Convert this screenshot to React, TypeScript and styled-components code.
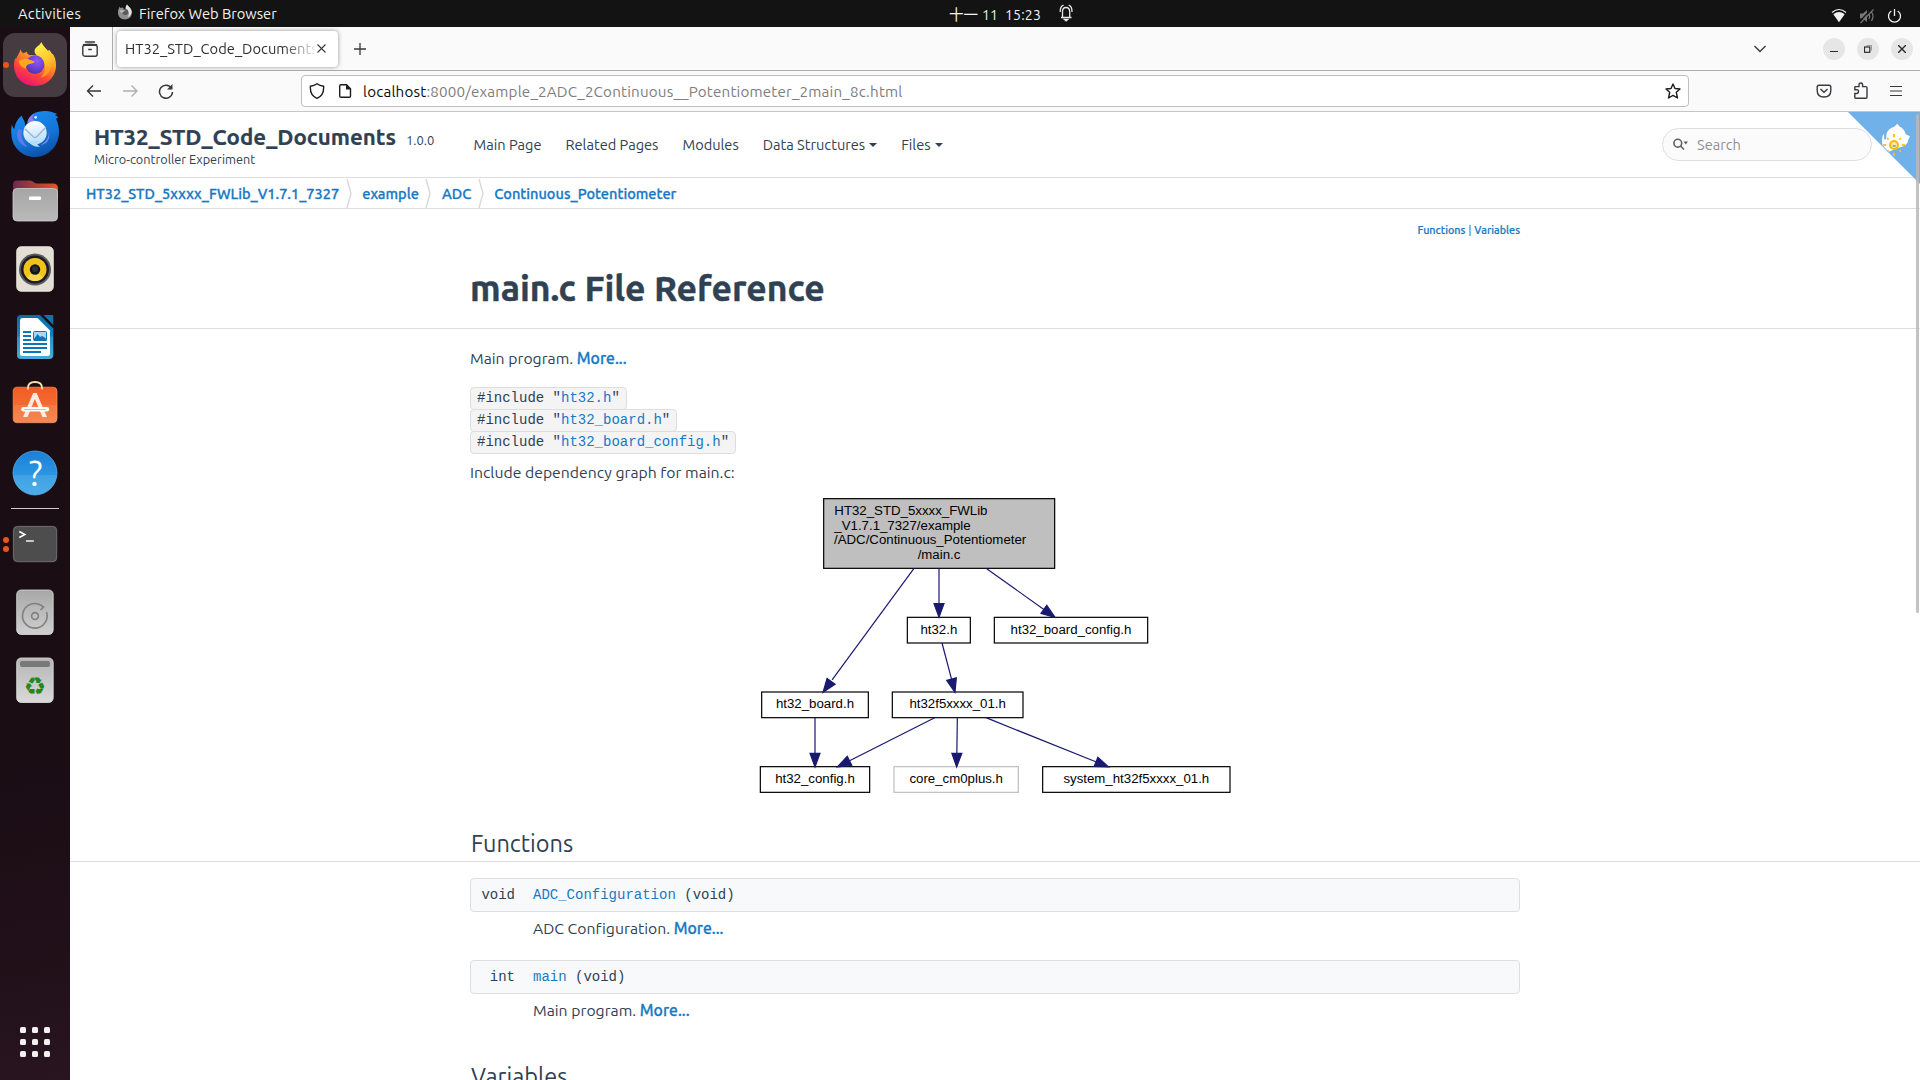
import React from 'react';
import styled, { createGlobalStyle } from 'styled-components';

const SANS = '"Ubuntu", "Noto Sans", "Open Sans", sans-serif';
const MONO = '"Liberation Mono", monospace';
const INK = '#2f4153';
const LINK = '#1779c4';
const LINE = '#dedede';

const GlobalStyle = createGlobalStyle`
  * { box-sizing: border-box; }
  html, body { margin: 0; padding: 0; overflow: hidden; background: #fff; }
  svg { display: block; flex: none; }
`;

const Desktop = styled.div`
  display: grid;
  grid-template: 27px 1053px / 70px 1850px;
  width: 1920px;
  height: 1080px;
  font-family: ${SANS};
  font-variant-ligatures: none;
  overflow: hidden;
`;

/* ---------- top panel ---------- */

const Panel = styled.header`
  grid-column: 1 / -1;
  display: grid;
  grid-template-columns: 949px 1fr auto;
  background: #131313;
  color: #f2f2f2;
  font-size: 14.7px;
  line-height: 27px;
`;

const PanelLeft = styled.div`
  display: flex;
  padding-left: 18px;
`;

const Activities = styled.span`
  width: 99px;
  letter-spacing: 0.28px;
`;

const AppMenu = styled.span`
  display: flex;
  gap: 6px;
  letter-spacing: -0.02px;
  svg { margin-top: 4px; }
`;

const Clock = styled.div`
  display: flex;
  align-items: flex-start;
  white-space: pre;
  font-size: 14px;
  line-height: 31px;
  letter-spacing: 0.2px;
`;

const ClockDate = styled.span`
  font-family: "Noto Sans CJK SC", sans-serif;
  font-size: 14.5px;
  line-height: 27px;
  letter-spacing: 0;
  width: 33px;
`;

const ClockTime = styled.span`
  width: 77px;
`;

const Tray = styled.div`
  display: flex;
  align-items: center;
  gap: 12px;
  padding-right: 18px;
`;

/* ---------- dock ---------- */

const Dock = styled.nav`
  display: flex;
  flex-direction: column;
  padding-top: 4px;
  background: linear-gradient(170deg, #1a0d13 0%, #1a0d14 70%, #221019 88%, #28151f 100%);
`;

const DockCell = styled.div`
  display: grid;
  grid-template-columns: 3px 64px;
  align-items: center;
  height: 68px;
  position: relative;
`;

const DockTile = styled.div<{ $active?: boolean }>`
  grid-column: 2;
  width: 64px;
  height: 64px;
  border-radius: 12px;
  background: ${(p) => (p.$active ? '#453b41' : 'transparent')};
`;

const RunningDots = styled.div`
  position: absolute;
  left: 3px;
  top: 0;
  height: 68px;
  display: flex;
  flex-direction: column;
  justify-content: center;
  gap: 3px;
`;

const RunningDot = styled.i`
  width: 6px;
  height: 6px;
  border-radius: 50%;
  background: #e95420;
`;

const DockRule = styled.div`
  height: 1px;
  margin: 1px 11px;
  background: #d0ccce;
`;

const AppsGrid = styled.div`
  display: grid;
  grid-template-columns: repeat(3, 6px);
  grid-auto-rows: 6px;
  gap: 6px;
  justify-content: center;
  margin-top: auto;
  padding-bottom: 23px;
  i { background: #f2f0f1; border-radius: 1.5px; }
`;

/* ---------- browser chrome ---------- */

const Browser = styled.main`
  display: flex;
  flex-direction: column;
  min-width: 0;
  background: #fff;
`;

const TabStrip = styled.div`
  display: flex;
  align-items: center;
  height: 44px;
  background: #fafafa;
  border-bottom: 1px solid #adadad;
`;

const ViewButton = styled.div`
  width: 43px;
  height: 43px;
  padding: 14px 0 0 12px;
  border-right: 1px solid #adadad;
`;

const Tab = styled.div`
  display: flex;
  align-items: center;
  justify-content: space-between;
  width: 221px;
  height: 36px;
  margin: 0 16px 0 4px;
  padding: 0 12px 0 8px;
  background: #fff;
  border-radius: 4px;
  box-shadow: 0 0 4px rgba(0, 0, 0, 0.42);
`;

const TabTitle = styled.span`
  width: 190px;
  overflow: hidden;
  white-space: nowrap;
  font-size: 14.7px;
  line-height: 24px;
  color: #2e2e33;
  mask-image: linear-gradient(to right, #000 158px, rgba(0, 0, 0, 0.1) 190px);
`;

const WindowControls = styled.div`
  display: flex;
  align-items: center;
  gap: 12px;
  margin-left: auto;
  padding-right: 7px;
`;

const ControlButton = styled.span`
  display: grid;
  place-items: center;
  width: 22px;
  height: 22px;
  border-radius: 50%;
  background: #e6e6e6;
`;

const TabMenu = styled.span`
  margin-right: 45px;
`;

const Toolbar = styled.div`
  display: flex;
  align-items: center;
  height: 41px;
  padding: 0 18px 0 16px;
  background: #fafafa;
  border-bottom: 1px solid #c6c6c6;
`;

const NavButtons = styled.div`
  display: flex;
  align-items: center;
  gap: 20px;
  width: 215px;
`;

const UrlBar = styled.div`
  display: flex;
  align-items: center;
  width: 1388px;
  height: 32px;
  padding: 0 7px 0 7px;
  background: #fff;
  border: 1px solid #bfbfc0;
  border-radius: 4px;
`;

const Url = styled.span`
  flex: 1;
  margin: 2px 0 0 11px;
  font-size: 15.2px;
  line-height: 24px;
  letter-spacing: 0.18px;
  color: #7d7d80;
  b { font-weight: 400; color: #0c0c0d; }
`;

const UrlIcons = styled.span`
  display: flex;
  align-items: center;
  gap: 13px;
`;

const ToolbarEnd = styled.div`
  display: flex;
  align-items: center;
  gap: 21px;
  margin-left: auto;
`;

/* ---------- document page ---------- */

const Page = styled.div`
  position: relative;
  height: 968px;
  overflow: hidden;
  color: ${INK};
`;

const Masthead = styled.div`
  display: flex;
  height: 66px;
  padding: 0 48px 0 24px;
  border-bottom: 1px solid ${LINE};
`;

const Project = styled.div`
  width: 379.5px;
  padding-top: 10px;
`;

const ProjectName = styled.div`
  font-size: 22.25px;
  font-weight: 700;
  line-height: 29px;
  white-space: nowrap;
  -webkit-text-stroke: 0.2px ${INK};
`;

const Version = styled.span`
  margin-left: 10px;
  font-size: 13px;
  font-weight: 400;
  line-height: 1;
  -webkit-text-stroke: 0;
`;

const ProjectBrief = styled.div`
  font-size: 12.7px;
  line-height: 16px;
`;

const Menu = styled.div`
  display: flex;
  align-items: center;
  gap: 24px;
`;

const MenuItem = styled.span`
  display: flex;
  align-items: center;
  gap: 4px;
  font-size: 14.6px;
  line-height: 20px;
`;

const Caret = styled.i`
  border: 4px solid transparent;
  border-top-color: ${INK};
  border-bottom: 0;
`;

const SearchBox = styled.div`
  display: flex;
  align-items: center;
  gap: 8px;
  width: 210px;
  height: 33px;
  margin: 16px 0 0 auto;
  padding-left: 10px;
  border: 1px solid ${LINE};
  border-radius: 17px;
  background: #fbfbfb;
  color: #909090;
  font-size: 14.6px;
  line-height: 20px;
`;

const Corner = styled.svg`
  position: absolute;
  right: 0;
  top: 0;
`;

const ScrollThumb = styled.div`
  position: absolute;
  right: 1px;
  top: 2px;
  width: 3px;
  height: 499px;
  border-radius: 2px;
  background: rgba(185, 185, 185, 0.85);
`;

const Crumbs = styled.div`
  display: flex;
  height: 31px;
  padding-left: 16px;
  border-bottom: 1px solid ${LINE};
`;

const Crumb = styled.a`
  color: ${LINK};
  font-size: 14.57px;
  font-weight: 500;
  line-height: 32px;
  -webkit-text-stroke: 0.3px ${LINK};
`;

const CrumbArrow = styled.svg`
  margin: 1px 9.5px 0 6.5px;
`;

const Column = styled.div`
  width: 1050px;
  margin: 0 auto;
`;

const TitleBand = styled.div`
  height: 120px;
  padding-top: 13px;
  border-bottom: 1px solid ${LINE};
`;

const Summary = styled.div`
  display: flex;
  justify-content: flex-end;
  gap: 3px;
  font-size: 10.8px;
  font-weight: 500;
  line-height: 16px;
  color: ${LINK};
  -webkit-text-stroke: 0.2px ${LINK};
`;

const SummaryBar = styled.span`
  font-weight: 400;
  color: ${INK};
  -webkit-text-stroke: 0;
`;

const Title = styled.h1`
  margin: 25px 0 0;
  font-size: 35.55px;
  font-weight: 700;
  line-height: 50px;
  -webkit-text-stroke: 0.4px ${INK};
`;

const Text = styled.p<{ $indent?: boolean }>`
  margin: 0;
  padding-left: ${(p) => (p.$indent ? 63 : 0)}px;
  font-size: 15.75px;
  line-height: 24px;
`;

const More = styled.a`
  color: ${LINK};
  font-weight: 500;
  -webkit-text-stroke: 0.3px ${LINK};
`;

const Includes = styled.div`
  display: flex;
  flex-direction: column;
  align-items: flex-start;
  margin: 17px 0 7px;
`;

const Include = styled.code`
  margin-bottom: -1px;
  padding: 0 6px;
  height: 23px;
  font: 14px/21px ${MONO};
  background: #f4f4f4;
  border: 1px solid ${LINE};
  border-radius: 4px;
  white-space: pre;
  a { color: ${LINK}; }
`;

const Intro = styled(Column)`
  padding-top: 17px;
  height: 497px;
`;

const Graph = styled.svg`
  margin: 10px auto 0;
`;

const SectionBand = styled.div`
  height: 36px;
  border-bottom: 1px solid ${LINE};
`;

const SectionTitle = styled.h2`
  margin: 0;
  padding-left: 1px;
  font-size: 23.5px;
  font-weight: 400;
  line-height: 35px;
`;

const Members = styled(Column)`
  padding-top: 16px;
`;

const Member = styled.div`
  display: grid;
  grid-template-columns: 44px 1fr;
  column-gap: 18px;
  height: 34px;
  font: 14px/32px ${MONO};
  white-space: pre;
  background: #f8f9fb;
  border: 1px solid ${LINE};
  border-radius: 4px;
  a { color: ${LINK}; }
`;

const ReturnType = styled.span`
  text-align: right;
`;

const Detail = styled.div`
  height: 48px;
  padding-top: 4px;
`;

const LastDetail = styled(Detail)`
  height: 65px;
`;

/* ---------- drawings ---------- */

function FirefoxIcon() {
  return (
    <svg width="64" height="64" viewBox="9 9 192 192">
      <defs>
        <linearGradient id="ffBody" x1="0.8" y1="0" x2="0.3" y2="1">
          <stop offset="0" stopColor="#fff04a" />
          <stop offset="0.4" stopColor="#ff9a22" />
          <stop offset="0.7" stopColor="#ff4438" />
          <stop offset="1" stopColor="#e9107a" />
        </linearGradient>
        <radialGradient id="ffGlobe" cx="0.6" cy="0.3" r="0.8">
          <stop offset="0" stopColor="#9059ff" />
          <stop offset="1" stopColor="#4b2ea8" />
        </radialGradient>
        <linearGradient id="ffFlame" x1="0.3" y1="0" x2="0.6" y2="1">
          <stop offset="0" stopColor="#fff350" />
          <stop offset="0.6" stopColor="#ffc62a" />
          <stop offset="1" stopColor="#ff8a26" />
        </linearGradient>
      </defs>
      <path fill="url(#ffBody)" d="M62 58C63 64 66 68 70 70L81 65C81 70 84 73 88 75L112 76C102 68 103 58 110 52C116 47 121 44 124 37C128 48 136 54 143 62L148 60L155 70L160 74C166 84 168 94 168 106C168 142 140 168 105 168C68 168 42 142 42 106C42 95 44 90 46 84L48 88C50 80 60 68 62 58Z" />
      <path fill="url(#ffFlame)" d="M124 37C128 48 138 54 144 64C152 76 156 90 154 108C150 128 138 140 122 142C140 126 140 100 122 84C106 74 100 66 106 56C112 48 121 46 124 37Z" />
      <circle cx="105" cy="104" r="28" fill="url(#ffGlobe)" />
      <path fill="#ffa51f" d="M56 92C66 86 76 86 84 86C90 90 98 92 104 94C103 100 94 101 86 103C80 105 77 110 78 116C64 112 58 104 56 92Z" />
    </svg>
  );
}

function ThunderbirdIcon() {
  return (
    <svg width="64" height="64" viewBox="9 213 192 192">
      <defs>
        <linearGradient id="tbBody" x1="0.2" y1="0" x2="0.6" y2="1">
          <stop offset="0" stopColor="#1b8df0" />
          <stop offset="0.6" stopColor="#1474d8" />
          <stop offset="1" stopColor="#0b50a6" />
        </linearGradient>
        <linearGradient id="tbMail" x1="0.3" y1="0" x2="0.5" y2="1">
          <stop offset="0" stopColor="#ffffff" />
          <stop offset="1" stopColor="#b4dcfb" />
        </linearGradient>
      </defs>
      <path fill="url(#tbBody)" d="M82 278C86 254 108 243 135 243C148 243 158 246 172 252L165 255L175 262L168 266C175 280 178 295 177 310C175 350 145 381 105 381C65 381 35 350 34 312C33 300 34 290 36 283C37 290 40 296 43 297C45 280 55 262 66 257C67 268 78 272 75 290Z" />
      <path fill="#8f7df0" d="M82 278C84 266 92 256 104 252C96 260 94 268 106 272C98 272 90 274 82 278Z" />
      <path fill="#5d7be8" d="M54 298C44 322 58 346 84 352C66 334 62 318 66 300Z" />
      <path fill="#8a8bf0" d="M146 300C150 322 138 338 122 344C142 344 152 326 146 300Z" />
      <circle cx="105" cy="308" r="35" fill="url(#tbMail)" />
      <path fill="#b4dcfb" d="M86 336C94 346 106 352 120 350C112 346 110 340 112 334Z" />
      <path d="M74 296L100 320Q105 324 110 320L138 292" fill="none" stroke="#9ab4cf" strokeWidth="4" />
      <circle cx="107" cy="262" r="4" fill="#e9f3ff" />
    </svg>
  );
}

function FilesIcon() {
  return (
    <svg width="64" height="64" viewBox="3 169.500 64 64">
      <defs>
        <linearGradient id="flBack"><stop offset="0" stopColor="#6d2a50" /><stop offset="1" stopColor="#e95420" /></linearGradient>
        <linearGradient id="flFront" x2="0" y2="1"><stop offset="0" stopColor="#a5a5a5" /><stop offset="1" stopColor="#bababa" /></linearGradient>
      </defs>
      <path fill="url(#flBack)" d="M13 185q0-4 4-4h13q2 0 3.500 1.500t3.500 1.500h16q5 0 5 5v10H13z" />
      <rect x="13" y="189" width="44.500" height="32.500" rx="4" fill="url(#flFront)" stroke="#cfcfcf" strokeWidth=".8" />
      <rect x="29" y="197" width="12" height="3.600" rx="1" fill="#fff" />
    </svg>
  );
}

function SpeakerIcon() {
  return (
    <svg width="64" height="64" viewBox="3 237 64 64">
      <rect x="16.700" y="246.700" width="36.600" height="44.600" rx="4.500" fill="#e3dfd4" stroke="#f5f2ea" strokeWidth=".8" />
      <circle cx="35" cy="269.500" r="16" fill="#5a5a5c" />
      <circle cx="35" cy="269.500" r="14" fill="#1c1c26" />
      <circle cx="35" cy="269.500" r="11.500" fill="#f0c419" />
      <path d="M35 269.500L27 277.700A11.500 11.500 0 0 0 43 277.700Z" fill="#fbe27a" opacity=".6" />
      <circle cx="35" cy="269.500" r="5.200" fill="#141418" />
      <circle cx="35" cy="269" r="3" fill="#2f3033" />
    </svg>
  );
}

function WriterIcon() {
  return (
    <svg width="64" height="64" viewBox="3 305 64 64">
      <defs>
        <linearGradient id="wr" x2="0" y2="1"><stop offset="0" stopColor="#0c6ca5" /><stop offset=".48" stopColor="#1482bf" /><stop offset=".5" stopColor="#2b93c9" /><stop offset="1" stopColor="#4aaad8" /></linearGradient>
      </defs>
      <path fill="url(#wr)" d="M21 315H40L53.300 328.500V355q0 4-4 4H21q-4 0-4-4V319q0-4 4-4z" />
      <path fill="#fff" d="M22 318H37.500L50 330.500V353.500q0 2.500-2.500 2.500H22.500q-2.500 0-2.500-2.500V320.500q0-2.500 2-2.500z" />
      <path fill="#1272ae" d="M43.500 315H52.300q1 0 1 1V325z" />
      <path stroke="#0b76b8" strokeWidth="2" d="M23 332h8M23 336h8M23 340h8M23 344h24M23 348h24M23 352h18" />
      <rect x="33.500" y="331.500" width="13" height="9" rx="1" fill="#a9d9f2" stroke="#0b76b8" />
      <path fill="#0b76b8" d="M34 341v-2l3.500-5 2.500 3 2-1 2 1 2.500 2v2z" />
    </svg>
  );
}

function SoftwareIcon() {
  return (
    <svg width="64" height="64" viewBox="3 373 64 64">
      <defs>
        <linearGradient id="sw" x2="0" y2="1"><stop offset="0" stopColor="#f25c22" /><stop offset=".49" stopColor="#f36a33" /><stop offset=".5" stopColor="#f4773f" /><stop offset="1" stopColor="#f58953" /></linearGradient>
      </defs>
      <rect x="13.200" y="387.200" width="43.800" height="35.500" rx="4" fill="url(#sw)" stroke="#f79a6d" strokeWidth=".7" />
      <path d="M28 389.500V388Q28 382 35 382T42 388V389.500" fill="none" stroke="#f8dfae" strokeWidth="1.800" />
      <path d="M33.200 393h3.400L47 417h-4.600L34.900 399 27.500 417H23z" fill="#fde9df" />
      <rect x="21.200" y="407" width="28" height="4.600" rx="2.300" fill="#fff" />
      <path d="M24 409.500h22" stroke="#f4a27e" strokeWidth=".8" />
    </svg>
  );
}

const HelpMark = styled.text`
  font: 400 35px "Ubuntu", "Open Sans", sans-serif;
  fill: #fff;
`;

function HelpIcon() {
  return (
    <svg width="64" height="64" viewBox="3 441 64 64">
      <defs>
        <linearGradient id="hp" x2="0" y2="1"><stop offset="0" stopColor="#1c7fd8" /><stop offset=".54" stopColor="#2b96e0" /><stop offset=".55" stopColor="#3fa2e4" /><stop offset="1" stopColor="#4dade8" /></linearGradient>
      </defs>
      <circle cx="35" cy="473" r="22" fill="url(#hp)" stroke="#62b6ee" strokeWidth=".7" />
      <HelpMark x="35.500" y="486.300" textAnchor="middle">?</HelpMark>
    </svg>
  );
}

function TerminalIcon() {
  return (
    <svg width="64" height="64" viewBox="3 512 64 64">
      <rect x="13.400" y="526.400" width="43.300" height="35.300" rx="4" fill="#4d4d4d" stroke="#777" strokeWidth=".9" />
      <path d="M19.300 531.500l5.500 3-5.500 3" fill="none" stroke="#fff" strokeWidth="1.600" />
      <path d="M26 541h7.800" stroke="#fff" strokeWidth="1.400" />
    </svg>
  );
}

function DiskIcon() {
  return (
    <svg width="64" height="64" viewBox="3 580 64 64">
      <defs><linearGradient id="dk" x2="0" y2="1"><stop offset="0" stopColor="#a8a8a8" /><stop offset="1" stopColor="#cfcfcf" /></linearGradient></defs>
      <rect x="16.700" y="590" width="36.500" height="44.500" rx="4.500" fill="url(#dk)" stroke="#dcdcdc" strokeWidth=".8" />
      <path d="M46.500 612A12.300 12.300 0 1 1 41 605.200L43.500 607 40.500 610" fill="none" stroke="#808080" strokeWidth="1.600" />
      <circle cx="35" cy="616" r="3.400" fill="none" stroke="#808080" strokeWidth="1.700" />
    </svg>
  );
}

const RecycleMark = styled.text`
  font: 25px "DejaVu Sans", sans-serif;
  fill: #26861c;
`;

function TrashIcon() {
  return (
    <svg width="64" height="64" viewBox="3 648 64 64">
      <defs><linearGradient id="tr" x2="0" y2="1"><stop offset="0" stopColor="#b5b5b5" /><stop offset="1" stopColor="#d9d9d9" /></linearGradient></defs>
      <rect x="16.700" y="658" width="36.500" height="44.500" rx="4.500" fill="url(#tr)" stroke="#e2e2e2" strokeWidth=".8" />
      <rect x="20" y="661" width="30" height="6" rx="2" fill="#787878" />
      <RecycleMark x="35" y="694.500" textAnchor="middle">♻</RecycleMark>
    </svg>
  );
}

const INK_ICON = '#38383d';

type NodeSpec = { x: number; y: number; w: number; h: number; label: string; muted?: boolean };

const nodes: NodeSpec[] = [
  { x: 502, y: 412, w: 189, h: 77, label: 'ht32.h' },
  { x: 763, y: 412, w: 460, h: 77, label: 'ht32_board_config.h' },
  { x: 65, y: 636, w: 320, h: 77, label: 'ht32_board.h' },
  { x: 457, y: 636, w: 392, h: 77, label: 'ht32f5xxxx_01.h' },
  { x: 61, y: 860, w: 328, h: 77, label: 'ht32_config.h' },
  { x: 462, y: 860, w: 373, h: 77, label: 'core_cm0plus.h', muted: true },
  { x: 908, y: 860, w: 562, h: 77, label: 'system_ht32f5xxxx_01.h' },
];

const edges: [number, number, number, number][] = [
  [522, 265, 249, 637],
  [597, 265, 597, 412],
  [738, 265, 945, 412],
  [606, 489, 645, 637],
  [225, 713, 225, 861],
  [584, 713, 292, 861],
  [652, 713, 650, 861],
  [738, 713, 1106, 861],
];

function arrowHead([x1, y1, x2, y2]: [number, number, number, number]) {
  const len = Math.hypot(x2 - x1, y2 - y1);
  const ux = (x2 - x1) / len;
  const uy = (y2 - y1) / len;
  const bx = x2 - ux * 41;
  const by = y2 - uy * 41;
  return `${x2},${y2} ${bx - uy * 15},${by + ux * 15} ${bx + uy * 15},${by - ux * 15}`;
}

const NodeLabel = styled.text`
  font: 39.8px "Liberation Sans", Helvetica, sans-serif;
  fill: #000;
`;

function DependencyGraph() {
  return (
    <Graph width="520" height="301" viewBox="-15 42 1560 903">
      <rect x="251" y="56" width="693" height="209" fill="#bfbfbf" stroke="#000" strokeWidth="3.600" />
      <NodeLabel x="283" y="104">HT32_STD_5xxxx_FWLib</NodeLabel>
      <NodeLabel x="283" y="149">_V1.7.1_7327/example</NodeLabel>
      <NodeLabel x="282" y="192">/ADC/Continuous_Potentiometer</NodeLabel>
      <NodeLabel x="597" y="236" textAnchor="middle">/main.c</NodeLabel>
      {nodes.map((n) => (
        <g key={n.label}>
          <rect x={n.x} y={n.y} width={n.w} height={n.h} fill="#fff" stroke={n.muted ? '#bfbfbf' : '#000'} strokeWidth="3.600" />
          <NodeLabel x={n.x + n.w / 2} y={n.y + 49} textAnchor="middle">{n.label}</NodeLabel>
        </g>
      ))}
      {edges.map((e) => (
        <g key={e.join()} stroke="#191970" strokeWidth="3.600">
          <line x1={e[0]} y1={e[1]} x2={e[2] - (e[2] - e[0]) * 0.1} y2={e[3] - (e[3] - e[1]) * 0.1} />
          <polygon points={arrowHead(e)} fill="#191970" strokeWidth="3.500" />
        </g>
      ))}
    </Graph>
  );
}

function CornerRibbon() {
  const rays = [0, 45, 90, 135, 180, 225, 270, 315];
  return (
    <Corner width="100" height="84" viewBox="0 18 300 252">
      <path d="M84 18H300V234Z" fill="#70b1e9" />
      <path fill="#fff" d="M232 53L240 63C248 65 255 75 257 85L270 91L264 103C264 113 254 122 240 124L206 137L187 117C185 104 186 92 190 84C194 86 192 93 193 100C196 103 200 100 199 90C199 78 207 66 222 63Z" />
      <circle cx="222" cy="117" r="12" fill="#f3e9a4" stroke="#f7b90e" strokeWidth="6" />
      <path fill="#9db383" d="M218 117h9v6h-9z" />
      {rays.map((a) => (
        <line key={a} x1="222" y1="94" x2="222" y2={a % 90 ? 88 : 84} transform={`rotate(${a} 222 117)`} stroke="#fcc40c" strokeWidth="5.500" />
      ))}
    </Corner>
  );
}

const Arrow = () => (
  <CrumbArrow width="7" height="29" viewBox="0 0 7 29">
    <path d="M1 0L5 14.500L1 29" fill="none" stroke="#d8d8d8" strokeWidth="1.400" />
  </CrumbArrow>
);

/* ---------- sections ---------- */

function TopPanel() {
  return (
    <Panel>
      <PanelLeft>
        <Activities>Activities</Activities>
        <AppMenu>
          <svg width="16" height="16" viewBox="0 0 16 16">
            <path fill="#8f8f8f" d="M2.500 2.500l1 1.500 2-.5L7 5l2-.5C8 3 9.500 2 10 .5c1 1.500 3.500 3 4.500 6 1.500 5-2 9-6.500 9-4.500 0-7.500-3.500-7-8C1.200 5.500 2.200 4 2.500 2.500z" />
            <path fill="#e2e2e2" d="M10 .5c1 1.500 3.500 3 4.500 6 .8 3-1.500 6-4 6.500 2-2 2-5 0-6.500C8 5 8.500 2.500 10 .5z" />
            <circle cx="8.200" cy="8" r="3" fill="#5a5a5a" />
            <path fill="#b9b9b9" d="M2.500 6.500c2-1 4-.5 6 0-1 1.500-3 .8-3.200 2.500C4 9 2.800 8 2.500 6.500z" />
          </svg>
          Firefox Web Browser
        </AppMenu>
      </PanelLeft>
      <Clock>
        <ClockDate>十一</ClockDate>
        <ClockTime>11  15:23</ClockTime>
        <svg width="14" height="18" viewBox="0 0 14 18" fill="none" stroke="#e8e8e8" strokeWidth="1.300" transform="translate(0 4)">
          <path d="M2 13.500h10.500M3.500 13.500V7.500Q3.500 3.500 7 3.500T10.700 7.500V13.500M1.200 8Q1 2.500 4.500 1.200M13 8Q13.200 2.500 9.700 1.200" />
          <path d="M5.500 15.500h3.200l-1.600 1.300z" fill="#e8e8e8" />
        </svg>
      </Clock>
      <Tray>
        <svg width="16" height="16" viewBox="0 0 16 16">
          <path d="M1 4.500Q8 -1.500 15 4.500" fill="none" stroke="#f2f2f2" strokeWidth="1.200" />
          <path d="M2.300 6.200Q8 2 13.700 6.200L8 14.300z" fill="#f2f2f2" />
        </svg>
        <svg width="16" height="16" viewBox="0 0 16 16" fill="none" stroke="#777" strokeWidth="1.200">
          <path d="M1 5.500h3L8 2v12L4 10.500H1z" fill="#777" stroke="none" />
          <path d="M1.500 15L14.500 1.500M10 6Q11.200 8 10 11M12.500 4Q15.500 8 12.500 13" />
          <path d="M0.500 13.500L13 .5" stroke="#131313" />
        </svg>
        <svg width="15" height="16" viewBox="0 0 15 16" fill="none" stroke="#f2f2f2" strokeWidth="1.300">
          <path d="M4.300 3A6 6 0 1 0 10.700 3M7.500 1v7" />
        </svg>
      </Tray>
    </Panel>
  );
}

function DockBar() {
  const before = [FilesIcon, SpeakerIcon, WriterIcon, SoftwareIcon, HelpIcon];
  return (
    <Dock>
      <DockCell>
        <DockTile $active><FirefoxIcon /></DockTile>
        <RunningDots><RunningDot /></RunningDots>
      </DockCell>
      <DockCell><DockTile><ThunderbirdIcon /></DockTile></DockCell>
      {before.map((Icon, i) => (
        <DockCell key={i}><DockTile><Icon /></DockTile></DockCell>
      ))}
      <DockRule />
      <DockCell>
        <DockTile><TerminalIcon /></DockTile>
        <RunningDots><RunningDot /><RunningDot /></RunningDots>
      </DockCell>
      <DockCell><DockTile><DiskIcon /></DockTile></DockCell>
      <DockCell><DockTile><TrashIcon /></DockTile></DockCell>
      <AppsGrid>{Array.from({ length: 9 }, (_, i) => <i key={i} />)}</AppsGrid>
    </Dock>
  );
}

function Tabs() {
  return (
    <TabStrip>
      <ViewButton>
        <svg width="16" height="16" viewBox="0 0 16 16" fill="none" stroke={INK_ICON} strokeWidth="1.400" strokeLinecap="round">
          <path d="M3.500 1h9M1.500 3.600Q8 3 14.500 3.600" />
          <rect x=".8" y="4.200" width="14.400" height="11" rx="2" />
          <path d="M6.800 8.500h2.400" />
        </svg>
      </ViewButton>
      <Tab>
        <TabTitle>HT32_STD_Code_Documents</TabTitle>
        <svg width="9" height="9" viewBox="0 0 9 9" stroke={INK_ICON} strokeWidth="1.100"><path d="M.5.5l8 8M8.500.5l-8 8" /></svg>
      </Tab>
      <svg width="12" height="12" viewBox="0 0 12 12" stroke={INK_ICON} strokeWidth="1.300"><path d="M6 0v12M0 6h12" /></svg>
      <WindowControls>
        <TabMenu>
          <svg width="12" height="8" viewBox="0 0 12 8" fill="none" stroke={INK_ICON} strokeWidth="1.400"><path d="M.5 1L6 6.500 11.500 1" /></svg>
        </TabMenu>
        <ControlButton><svg width="8" height="8" viewBox="0 0 8 8"><path d="M0 6.500h8" stroke="#2b2b2b" /></svg></ControlButton>
        <ControlButton>
          <svg width="8" height="8" viewBox="0 0 8 8" fill="none"><path d="M2.500.5h5v5" stroke="#9a9a9a" /><rect x=".5" y="2" width="5.300" height="5.300" stroke="#2b2b2b" strokeWidth="1.200" /></svg>
        </ControlButton>
        <ControlButton><svg width="8" height="8" viewBox="0 0 8 8"><path d="M0 0l8 8M8 0L0 8" stroke="#2b2b2b" strokeWidth="1.400" /></svg></ControlButton>
      </WindowControls>
    </TabStrip>
  );
}

function AddressBar() {
  return (
    <Toolbar>
      <NavButtons>
        <svg width="16" height="16" viewBox="0 0 16 16" fill="none" stroke={INK_ICON} strokeWidth="1.400"><path d="M7 2.500L1.500 8l5.500 5.500M1.500 8H15" /></svg>
        <svg width="16" height="16" viewBox="0 0 16 16" fill="none" stroke="#b0b0b2" strokeWidth="1.400"><path d="M9.500 2.500L15 8l-5.500 5.500M15 8H1" /></svg>
        <svg width="16" height="16" viewBox="0 0 16 16" fill="none" stroke={INK_ICON} strokeWidth="1.500"><path d="M13.500 5.200A6.500 6.500 0 1 0 14.500 9" /><path d="M14.500 1v5.500H9z" fill={INK_ICON} stroke="none" /></svg>
      </NavButtons>
      <UrlBar>
        <UrlIcons>
          <svg width="16" height="16" viewBox="0 0 16 16" fill="none" stroke="#1c1c1f" strokeWidth="1.400"><path d="M8 .8C10 2.300 12.500 3 14.600 3.200 15 8.500 13 13.500 8 15.300 3 13.500 1 8.500 1.400 3.200 3.500 3 6 2.300 8 .8z" /></svg>
          <svg width="14" height="16" viewBox="0 0 14 16" fill="none" stroke="#1c1c1f" strokeWidth="1.400"><path d="M3 1.700h5.500l4 4V13q0 1.300-1.300 1.300H3Q1.700 14.300 1.700 13V3Q1.700 1.700 3 1.700z" /><path d="M8 1.500V6.500h5z" fill="#1c1c1f" stroke="none" /></svg>
        </UrlIcons>
        <Url><b>localhost</b>:8000/example_2ADC_2Continuous__Potentiometer_2main_8c.html</Url>
        <svg width="16" height="16" viewBox="0 0 16 16" fill="none" stroke="#1c1c1f" strokeWidth="1.400" strokeLinejoin="round"><path d="M8 1l2 4.500 5 .5-3.700 3.300 1.200 5.700L8 12.400 3.500 15l1.200-5.700L1 6l5-.5z" /></svg>
      </UrlBar>
      <ToolbarEnd>
        <svg width="16" height="16" viewBox="0 0 16 16" fill="none" stroke={INK_ICON} strokeWidth="1.400"><path d="M3 2.200h10q1.800 0 1.800 1.800v3.500Q14.800 14 8 14T1.200 7.500V4Q1.200 2.200 3 2.200z" /><path d="M4.500 6L8 9.300 11.500 6" /></svg>
        <svg width="16" height="18" viewBox="0 0 16 18" fill="none" stroke={INK_ICON} strokeWidth="1.400"><path d="M2.700 16.300q-.9 0-.9-1V11.500H3.500Q5.500 11.500 5.500 9.500T3.500 7.800H1.800V5.600q0-1 1-1H6V3Q6 1 7.800 1T9.600 3V4.600h3.200q1.200 0 1.200 1.200v9.200q0 1.300-1.200 1.300z" /></svg>
        <svg width="12" height="12" viewBox="0 0 12 12" stroke={INK_ICON} strokeWidth="1.200"><path d="M0 1.500h12M0 6h12M0 10.500h12" /></svg>
      </ToolbarEnd>
    </Toolbar>
  );
}

function DocPage() {
  return (
    <Page>
      <Masthead>
        <Project>
          <ProjectName>HT32_STD_Code_Documents<Version>1.0.0</Version></ProjectName>
          <ProjectBrief>Micro-controller Experiment</ProjectBrief>
        </Project>
        <Menu>
          <MenuItem>Main Page</MenuItem>
          <MenuItem>Related Pages</MenuItem>
          <MenuItem>Modules</MenuItem>
          <MenuItem>Data Structures<Caret /></MenuItem>
          <MenuItem>Files<Caret /></MenuItem>
        </Menu>
        <SearchBox>
          <svg width="16" height="13" viewBox="0 0 16 13" fill="none" stroke="#5f5f5f" strokeWidth="1.600">
            <circle cx="4.800" cy="5.200" r="3.900" /><path d="M7.500 8L11 11.500" /><path d="M10.500 3.500h4.500l-2.200 3z" fill="#5f5f5f" stroke="none" />
          </svg>
          Search
        </SearchBox>
      </Masthead>
      <Crumbs>
        <Crumb>HT32_STD_5xxxx_FWLib_V1.7.1_7327</Crumb><Arrow />
        <Crumb>example</Crumb><Arrow />
        <Crumb>ADC</Crumb><Arrow />
        <Crumb>Continuous_Potentiometer</Crumb>
      </Crumbs>
      <TitleBand>
        <Column>
          <Summary><a>Functions</a><SummaryBar>|</SummaryBar><a>Variables</a></Summary>
          <Title>main.c File Reference</Title>
        </Column>
      </TitleBand>
      <Intro>
        <Text>Main program. <More>More...</More></Text>
        <Includes>
          <Include>#include "<a>ht32.h</a>"</Include>
          <Include>#include "<a>ht32_board.h</a>"</Include>
          <Include>#include "<a>ht32_board_config.h</a>"</Include>
        </Includes>
        <Text>Include dependency graph for main.c:</Text>
        <DependencyGraph />
      </Intro>
      <SectionBand><Column><SectionTitle>Functions</SectionTitle></Column></SectionBand>
      <Members>
        <Member><ReturnType>void</ReturnType><span><a>ADC_Configuration</a> (void)</span></Member>
        <Detail><Text $indent>ADC Configuration. <More>More...</More></Text></Detail>
        <Member><ReturnType>int</ReturnType><span><a>main</a> (void)</span></Member>
        <LastDetail><Text $indent>Main program. <More>More...</More></Text></LastDetail>
      </Members>
      <SectionBand><Column><SectionTitle>Variables</SectionTitle></Column></SectionBand>
      <CornerRibbon />
      <ScrollThumb />
    </Page>
  );
}

export default function App() {
  return (
    <>
      <GlobalStyle />
      <Desktop>
        <TopPanel />
        <DockBar />
        <Browser>
          <Tabs />
          <AddressBar />
          <DocPage />
        </Browser>
      </Desktop>
    </>
  );
}
